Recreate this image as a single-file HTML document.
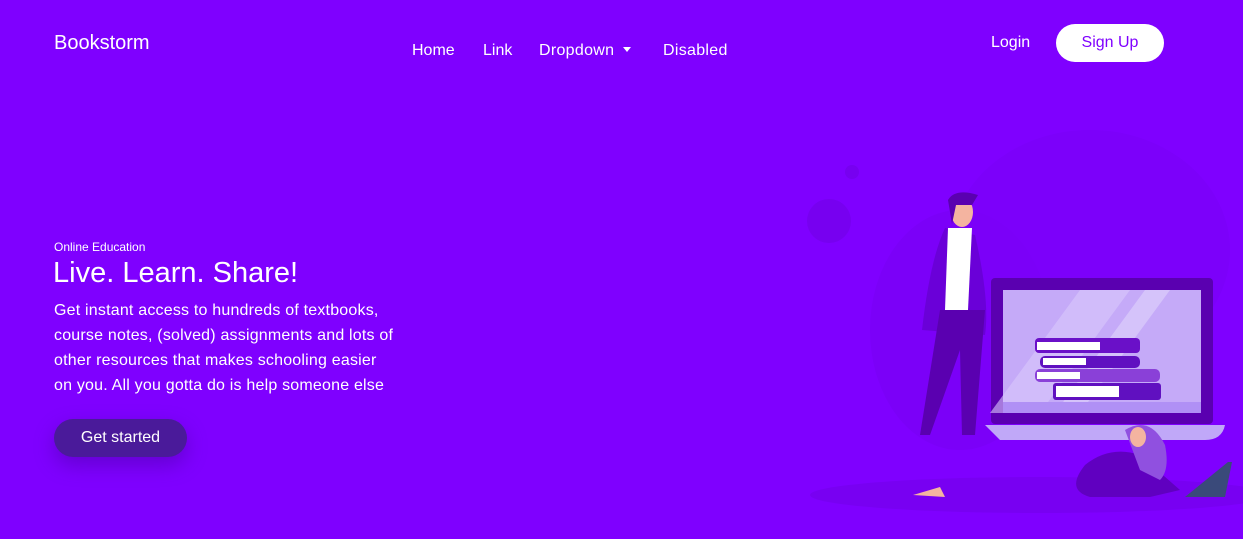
<!DOCTYPE html>
<html><head><meta charset="utf-8"><style>
*{margin:0;padding:0;box-sizing:border-box}
body{width:1243px;height:539px;overflow:hidden;background:#7f00ff;font-family:"Liberation Sans",sans-serif;color:#fff;position:relative}
.a{position:absolute;white-space:nowrap}
</style></head><body>
<div class="a" style="left:54px;top:32px;font-size:20px">Bookstorm</div>
<div class="a" style="left:412px;top:42px;font-size:16px">Home</div>
<div class="a" style="left:483px;top:42px;font-size:16px">Link</div>
<div class="a" style="left:539px;top:42px;font-size:16px;letter-spacing:.3px">Dropdown <span style="display:inline-block;border-left:4px solid transparent;border-right:4px solid transparent;border-top:5px solid #fff;vertical-align:3px;margin-left:4px"></span></div>
<div class="a" style="left:663px;top:42px;font-size:16px;letter-spacing:.3px">Disabled</div>
<div class="a" style="left:991px;top:34px;font-size:16px">Login</div>
<div class="a" style="left:1056px;top:24px;width:108px;height:38px;border-radius:19px;background:#fff;color:#7f00ff;font-size:16px;text-align:center;line-height:38px">Sign Up</div>
<div class="a" style="left:54px;top:240px;font-size:12px">Online Education</div>
<div class="a" style="left:53px;top:257px;font-size:29px">Live. Learn. Share!</div>
<div class="a" style="left:54px;top:298px;font-size:16px;line-height:25px;letter-spacing:.2px">Get instant access to hundreds of textbooks,<br>course notes, (solved) assignments and lots of<br>other resources that makes schooling easier<br>on you. All you gotta do is help someone else</div>
<div class="a" style="left:54px;top:419px;width:133px;height:38px;border-radius:19px;background:#4a1a9a;font-size:16px;text-align:center;line-height:38px;box-shadow:0 8px 20px rgba(60,0,140,.4)">Get started</div>
<svg class="a" style="left:0;top:0" width="1243" height="539">
<ellipse cx="1090" cy="250" rx="140" ry="120" fill="#7c00fa"/>
<ellipse cx="960" cy="330" rx="90" ry="120" fill="#7b00f8"/>
<circle cx="829" cy="221" r="22" fill="#7700f0"/>
<circle cx="852" cy="172" r="7" fill="#7700f0"/>
<ellipse cx="1040" cy="495" rx="230" ry="18" fill="#7800f2"/>
<rect x="991" y="278" width="222" height="146" rx="4" fill="#5a00b0"/>
<rect x="1003" y="290" width="198" height="123" fill="#c5aaf8"/>
<polygon points="1080,290 1130,290 1040,413 990,413" fill="#d8c8fb" opacity=".6"/>
<polygon points="1145,290 1170,290 1080,413 1055,413" fill="#e0d4fc" opacity=".6"/>
<rect x="1003" y="402" width="198" height="11" fill="#b090f5"/>
<rect x="1035" y="338" width="105" height="15" rx="4" fill="#6a10c8"/><rect x="1037" y="342" width="63" height="8" fill="#fff"/>
<rect x="1040" y="356" width="100" height="12" rx="5" fill="#6010c0"/><rect x="1043" y="358" width="43" height="7" fill="#fff"/>
<rect x="1035" y="369" width="125" height="13" rx="5" fill="#8a40d8"/><rect x="1037" y="372" width="43" height="7" fill="#fff"/>
<rect x="1053" y="383" width="108" height="17" rx="3" fill="#6010c0"/><rect x="1056" y="386" width="63" height="11" fill="#fff"/>
<path d="M985 425 H1225 Q1222 440 1205 440 H1000 Z" fill="#c0a8f8"/>
<path d="M945 228 Q930 260 922 330 L985 335 Q990 300 975 235 Z" fill="#6a00d8"/>
<path d="M948 228 H972 L968 310 H945 Z" fill="#fff"/>
<path d="M940 310 H985 L975 435 H962 L960 350 L930 435 H920 Z" fill="#5a00b0"/>
<ellipse cx="962" cy="212" rx="11" ry="15" fill="#f4b4a0"/>
<path d="M948 200 Q955 188 978 195 L972 205 L956 205 L952 224 Z" fill="#5a00b0"/>
<path d="M1085 465 Q1110 445 1140 455 L1180 490 L1150 497 H1090 Q1065 490 1085 465 Z" fill="#6000c0"/>
<path d="M1125 430 Q1150 415 1165 445 Q1170 470 1160 480 L1140 470 Z" fill="#9050e0"/>
<ellipse cx="1138" cy="437" rx="8" ry="10" fill="#f4b4a0"/>
<path d="M1185 497 L1225 497 L1232 462 L1228 462 Z" fill="#3a4a7a"/>
<path d="M913 495 L940 487 L945 497 Z" fill="#f4b4a0"/>
</svg>
</body></html>
